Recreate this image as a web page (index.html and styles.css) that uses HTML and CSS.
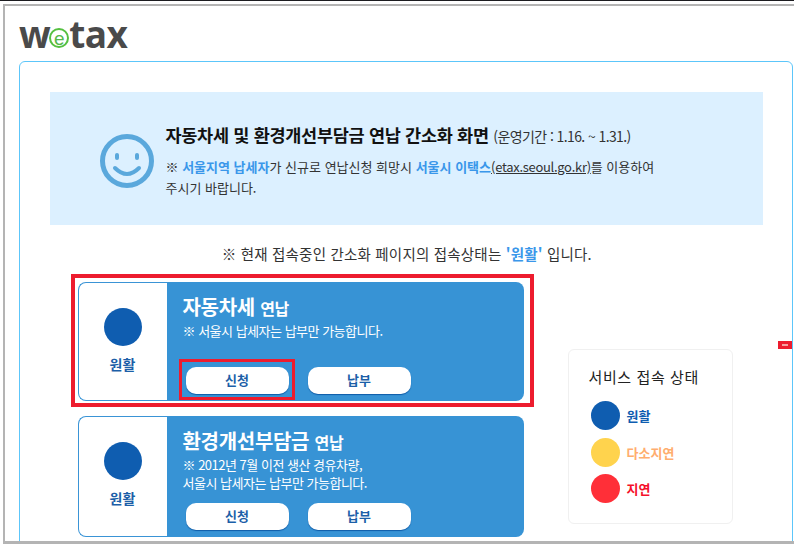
FILE: index.html
```html
<!DOCTYPE html>
<html lang="ko">
<head>
<meta charset="utf-8">
<title>wetax</title>
<link rel="stylesheet" href="styles.css">
</head>
<body>
<div class="page">
  <header class="logo"><span>w</span><span class="logo-e">e</span><span>tax</span></header>
  <main class="box">
    <span class="badge"></span>
    <section class="banner">
      <svg class="smile" width="56" height="56" viewBox="0 0 56 56">
        <circle cx="28" cy="28" r="24.5" fill="none" stroke="#5aa8dc" stroke-width="5"/>
        <rect x="16" y="20" width="4" height="7" rx="2" fill="#5aa8dc"/>
        <rect x="36" y="20" width="4" height="7" rx="2" fill="#5aa8dc"/>
        <path d="M16 35 Q28 47 40 35" fill="none" stroke="#5aa8dc" stroke-width="4" stroke-linecap="round"/>
      </svg>
      <div class="banner-text">
        <h1 class="title">자동차세 및 환경개선부담금 연납 간소화 화면 <small>(운영기간 : 1.16. ~ 1.31.)</small></h1>
        <p class="note">※ <b>서울지역 납세자</b>가 신규로 연납신청 희망시 <b>서울시 이택스</b><u>(etax.seoul.go.kr)</u>를 이용하여<br>주시기 바랍니다.</p>
      </div>
    </section>
    <p class="status-line">※ 현재 접속중인 간소화 페이지의 접속상태는 <b>'원활'</b> 입니다.</p>
    <div class="columns">
      <div class="cards">
        <article class="card card-first">
          <div class="state"><i class="dot dot-big"></i><strong>원활</strong></div>
          <div class="info">
            <h2>자동차세 <small>연납</small></h2>
            <p class="info-note">※ 서울시 납세자는 납부만 가능합니다.</p>
            <div class="actions"><a class="btn btn-marked">신청</a><a class="btn">납부</a></div>
          </div>
        </article>
        <article class="card">
          <div class="state"><i class="dot dot-big"></i><strong>원활</strong></div>
          <div class="info">
            <h2>환경개선부담금 <small>연납</small></h2>
            <p class="info-note">※ 2012년 7월 이전 생산 경유차량,<br>서울시 납세자는 납부만 가능합니다.</p>
            <div class="actions"><a class="btn">신청</a><a class="btn">납부</a></div>
          </div>
        </article>
      </div>
      <aside class="legend">
        <h3>서비스 접속 상태</h3>
        <div class="legend-row"><i class="dot"></i><span class="c-blue">원활</span></div>
        <div class="legend-row"><i class="dot dot-yellow"></i><span class="c-orange">다소지연</span></div>
        <div class="legend-row"><i class="dot dot-red"></i><span class="c-red">지연</span></div>
      </aside>
    </div>
  </main>
</div>
</body>
</html>
```
FILE: styles.css
```css
* { box-sizing: border-box; }
html, body { margin: 0; padding: 0; }
body {
  width: 794px;
  height: 544px;
  overflow: hidden;
  background: #fff;
  border-top: 1px solid #1c1c20;
  padding: 3px 0 0 3px;
  font-family: "Noto Sans CJK KR", "Noto Sans", sans-serif;
  color: #222;
}
.page {
  height: 540px;
  border-top: 2px solid #b4b4b4;
  border-left: 2px solid #b4b4b4;
  border-bottom: 3px solid #b4b4b4;
  overflow: hidden;
  padding: 0 0 0 14px;
}
.logo {
  height: 55px;
  padding-top: 1px;
  font-family: "Open Sans", "DejaVu Sans", sans-serif;
  font-weight: 700;
  font-size: 37px;
  line-height: 46px;
  letter-spacing: -0.5px;
  color: #4a4a4a;
  display: flex;
  align-items: center;
}
.logo-e {
  color: #55b948;
  font-size: 19px;
  font-weight: 400;
  width: 20px;
  height: 20px;
  line-height: 17px;
  margin: 8px 0 0 -1px;
  border: 2px solid #55c040;
  border-radius: 50%;
  text-align: center;
  letter-spacing: 0;
  font-family: "Liberation Sans", sans-serif;
}
.box {
  position: relative;
  width: 774px;
  height: 520px;
  border: 1.5px solid #5cc6fa;
  border-radius: 6px;
  padding: 29.5px 28px 0 29.5px;
}
.banner {
  width: 713px;
  height: 133px;
  background: #dcf0ff;
  display: flex;
  align-items: center;
  padding: 3px 0 0 49px;
  gap: 11px;
}
.smile { flex: none; margin-top: 2px; }
.banner-text { flex: 1; }
.title {
  margin: 0 0 7px;
  font-size: 17.5px;
  line-height: 26px;
  font-weight: 700;
  color: #111;
  letter-spacing: -0.3px;
  white-space: nowrap;
}
.title small {
  font-size: 14px;
  font-weight: 400;
  color: #333;
  letter-spacing: -0.6px;
}
.note {
  margin: 0;
  font-size: 13px;
  line-height: 21px;
  color: #333;
  white-space: nowrap;
}
.note b { color: #3a97ea; font-weight: 700; }
.note u { letter-spacing: -0.3px; }
.status-line {
  margin: 17px 0 0;
  height: 24px;
  font-size: 14.5px;
  line-height: 24px;
  text-align: center;
  color: #333;
  letter-spacing: 0.2px;
}
.status-line b { color: #3a97ea; font-weight: 700; }
.columns {
  display: flex;
  align-items: flex-start;
  padding: 16px 0 0 28px;
}
.cards {
  display: flex;
  flex-direction: column;
  gap: 15px;
  width: 446px;
}
.card {
  display: flex;
  height: 119px;
  border-radius: 8px;
  position: relative;
}
.card + .card { height: 121px; }
.card-first::after {
  content: "";
  position: absolute;
  left: -7px;
  right: -10px;
  top: -8px;
  bottom: -6px;
  border: 4px solid #ed1c2e;
  pointer-events: none;
}
.state {
  width: 89px;
  flex: none;
  border: 1px solid #3a94d6;
  border-right: 0;
  border-radius: 8px 0 0 8px;
  display: flex;
  flex-direction: column;
  align-items: center;
  padding-top: 25px;
  gap: 8px;
  background: #fff;
}
.state strong {
  font-size: 14px;
  line-height: 20px;
  color: #1c5fa8;
  font-weight: 700;
}
.dot {
  display: block;
  width: 29px;
  height: 29px;
  flex: none;
  border-radius: 50%;
  background: #0f5db0;
}
.dot-big { width: 38px; height: 38px; }
.dot-yellow { background: #ffd34d; }
.dot-red { background: #ff2f38; }
.info {
  flex: 1;
  background: #3793d5;
  border-radius: 0 8px 8px 0;
  color: #fff;
  padding: 11px 0 0 16px;
  display: flex;
  flex-direction: column;
}
.info h2 {
  margin: 0;
  font-size: 20px;
  line-height: 28px;
  font-weight: 700;
  letter-spacing: -0.3px;
}
.info h2 small { font-size: 16px; font-weight: 700; }
.info-note {
  margin: 0;
  font-size: 13px;
  line-height: 18px;
  letter-spacing: -0.5px;
}
.actions {
  margin-top: auto;
  padding: 0 0 7px 3px;
  display: flex;
  gap: 19px;
}
.btn {
  position: relative;
  width: 103px;
  height: 27px;
  background: #fff;
  border-radius: 10px;
  box-shadow: 0 1px 1px #0f5ca8;
  font-size: 13px;
  line-height: 26px;
  font-weight: 700;
  color: #1c5fa8;
  text-align: center;
}
.btn-marked::after {
  content: "";
  position: absolute;
  left: -7px;
  right: -6px;
  top: -8px;
  bottom: -6px;
  border: 3.5px solid #ed1c2e;
}
.legend {
  width: 165px;
  height: 175px;
  margin: 67px 0 0 44px;
  border: 1px solid #f0f0f0;
  border-radius: 6px;
  padding: 15px 0 0 20px;
}
.legend h3 {
  margin: 0 0 9px;
  font-size: 15px;
  line-height: 24px;
  font-weight: 400;
  color: #222;
  letter-spacing: 0.6px;
}
.legend-row {
  display: flex;
  align-items: center;
  height: 36.5px;
  gap: 7px;
  padding-left: 2px;
  font-size: 13px;
  font-weight: 700;
}
.c-blue { color: #0f5db0; }
.c-orange { color: #ffad6e; }
.c-red { color: #f5102a; }
.badge {
  position: absolute;
  right: 0;
  top: 279px;
  width: 14px;
  height: 8px;
  background: #ed1c2e;
}
.badge::after {
  content: "";
  position: absolute;
  left: 4px;
  top: 3px;
  width: 6px;
  height: 2px;
  background: #f5a0a0;
}
```
